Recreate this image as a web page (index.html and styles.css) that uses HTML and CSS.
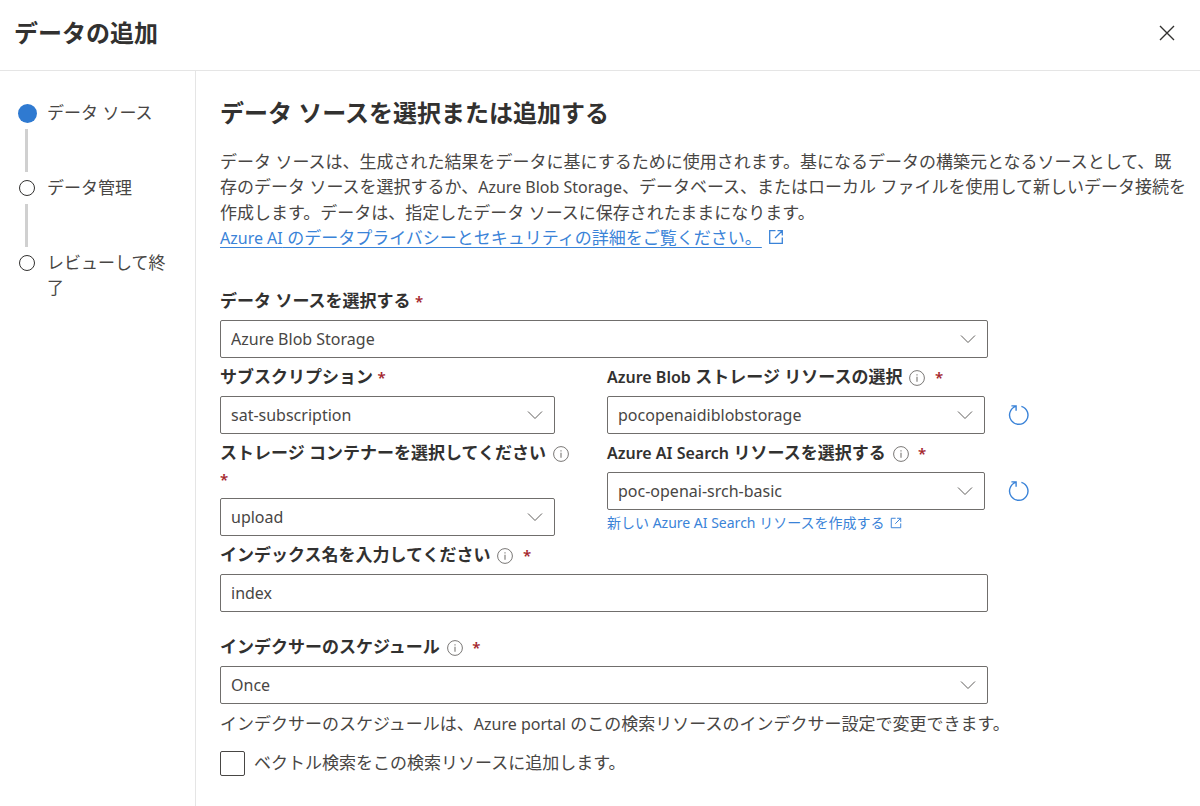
FILE: index.html
```html
<!DOCTYPE html>
<html lang="ja">

<head>
	<meta charset="UTF-8">
	<meta name="viewport" content="width=device-width, initial-scale=1">
	<title>データの追加</title>
	<link rel="stylesheet" href="styles.css">
</head>

<body>
	<!-- shared icons -->
	<svg class="icon-defs" width="0" height="0" aria-hidden="true">
		<symbol id="icon-chevron" viewBox="0 0 16 16">
			<path d="M1 4.5l7 7 7-7" fill="none" stroke="currentColor" stroke-width="1"/>
		</symbol>
		<symbol id="icon-info" viewBox="0 0 16 16">
			<circle cx="8" cy="8" r="7.4" fill="none" stroke="currentColor" stroke-width="1"/>
			<path d="M8 6.8v5M8 4.2v1.3" fill="none" stroke="currentColor" stroke-width="1.1"/>
		</symbol>
		<symbol id="icon-external" viewBox="0 0 16 16">
			<path d="M7.5 1.7H1.7v12.6h12.6V8.5M9.5 1.7h4.8v4.8M14.3 1.7L7 9" fill="none" stroke="currentColor" stroke-width="1.3"/>
		</symbol>
		<symbol id="icon-refresh" viewBox="0 0 22 22">
			<path d="M13.4 2.3A9.2 9.2 0 1 1 7.8 2.4M3.4 1.9h4.7v4.9" fill="none" stroke="currentColor" stroke-width="1.4"/>
		</symbol>
	</svg>

	<header class="header">
		<h1>データの追加</h1>
		<button type="button" class="close" aria-label="閉じる">
			<svg width="16" height="16" viewBox="0 0 16 16"><path d="M1 1l14 14M15 1L1 15" fill="none" stroke="currentColor" stroke-width="1.4"/></svg>
		</button>
	</header>

	<div class="layout">
		<nav class="sidebar">
			<ol class="steps">
				<li class="step active" aria-current="step">
					<span class="marker"></span>
					<span class="step-name">データ ソース</span>
				</li>
				<li class="step">
					<span class="marker"></span>
					<span class="step-name">データ管理</span>
				</li>
				<li class="step">
					<span class="marker"></span>
					<span class="step-name">レビューして終了</span>
				</li>
			</ol>
		</nav>

		<main class="content">
			<h2>データ ソースを選択または追加する</h2>
			<p class="description">
				データ ソースは、生成された結果をデータに基にするために使用されます。基になるデータの構築元となるソースとして、既存のデータ ソースを選択するか、<span class="latin">Azure Blob Storage</span>、データベース、またはローカル ファイルを使用して新しいデータ接続を作成します。データは、指定したデータ ソースに保存されたままになります。<br>
				<a href="#privacy" class="privacy"><u><span class="latin">Azure AI</span> のデータプライバシーとセキュリティの詳細をご覧ください。</u><svg class="external"><use href="#icon-external"/></svg></a>
			</p>

			<form>
				<div class="field">
					<label for="source">データ ソースを選択する <span class="required">*</span></label>
					<div class="select">
						<select id="source"><option>Azure Blob Storage</option></select>
						<svg class="chevron"><use href="#icon-chevron"/></svg>
					</div>
				</div>

				<div class="columns">
					<div class="column">
						<div class="field">
							<label for="subscription">サブスクリプション <span class="required">*</span></label>
							<div class="select">
								<select id="subscription"><option>sat-subscription</option></select>
								<svg class="chevron"><use href="#icon-chevron"/></svg>
							</div>
						</div>
						<div class="field">
							<label for="container">ストレージ コンテナーを選択してください<svg class="info"><use href="#icon-info"/></svg> <span class="required">*</span></label>
							<div class="select">
								<select id="container"><option>upload</option></select>
								<svg class="chevron"><use href="#icon-chevron"/></svg>
							</div>
						</div>
					</div>

					<div class="column">
						<div class="field">
							<label for="storage"><span class="latin">Azure Blob</span> ストレージ リソースの選択<svg class="info"><use href="#icon-info"/></svg> <span class="required">*</span></label>
							<div class="with-refresh">
								<div class="select">
									<select id="storage"><option>pocopenaidiblobstorage</option></select>
									<svg class="chevron"><use href="#icon-chevron"/></svg>
								</div>
								<button type="button" class="refresh" aria-label="更新"><svg><use href="#icon-refresh"/></svg></button>
							</div>
						</div>
						<div class="field">
							<label for="search"><span class="latin">Azure AI Search</span> リソースを選択する<svg class="info"><use href="#icon-info"/></svg> <span class="required">*</span></label>
							<div class="with-refresh">
								<div class="select">
									<select id="search"><option>poc-openai-srch-basic</option></select>
									<svg class="chevron"><use href="#icon-chevron"/></svg>
								</div>
								<button type="button" class="refresh" aria-label="更新"><svg><use href="#icon-refresh"/></svg></button>
							</div>
						</div>
						<a href="#create" class="create">新しい Azure AI Search リソースを作成する<svg class="external"><use href="#icon-external"/></svg></a>
					</div>
				</div>

				<div class="field">
					<label for="index">インデックス名を入力してください<svg class="info"><use href="#icon-info"/></svg> <span class="required">*</span></label>
					<input type="text" id="index" value="index">
				</div>

				<div class="field schedule">
					<label for="schedule">インデクサーのスケジュール<svg class="info"><use href="#icon-info"/></svg> <span class="required">*</span></label>
					<div class="select">
						<select id="schedule"><option>Once</option></select>
						<svg class="chevron"><use href="#icon-chevron"/></svg>
					</div>
				</div>
				<p class="help">インデクサーのスケジュールは、<span class="latin">Azure portal</span> のこの検索リソースのインデクサー設定で変更できます。</p>

				<div class="check">
					<input type="checkbox" id="vector">
					<label for="vector">ベクトル検索をこの検索リソースに追加します。</label>
				</div>
			</form>
		</main>
	</div>
</body>
</html>
```

FILE: styles.css
```css
* {
	box-sizing: border-box;
}

body {
	margin: 0;
	min-height: 100vh;
	display: flex;
	flex-direction: column;
	background: #fff;
	color: #484644;
	font-family: "Noto Sans", "Noto Sans CJK JP", sans-serif;
	font-size: 17px;
	line-height: 26px;
}

h1,
h2 {
	margin: 0;
	color: #323130;
	font-size: 24px;
	font-weight: 600;
	line-height: 32px;
}

a {
	color: #3a83d8;
	text-decoration: none;
}

button {
	padding: 0;
	border: 0;
	background: none;
	cursor: pointer;
}

.icon-defs {
	position: absolute;
}

/* segoe-like width for latin words inside japanese text */
.latin {
	font-size: 16px;
}

/* header */
.header {
	display: flex;
	justify-content: space-between;
	align-items: center;
	padding: 17px 25px 21px 14px;
	border-bottom: 1px solid #e5e5e5;
}

.close {
	display: flex;
	color: #323130;
}

.layout {
	flex: 1;
	display: flex;
}

/* steps */
.sidebar {
	flex: 0 0 196px;
	padding: 29px 24px 0 18px;
	border-right: 1px solid #e5e5e5;
}

.steps {
	margin: 0;
	padding: 0;
	list-style: none;
}

.step {
	display: grid;
	grid-template-columns: 18px 1fr;
	grid-template-rows: 26px 1fr;
	column-gap: 11px;
	min-height: 75px;
}

.step-name {
	grid-column: 2;
	grid-row: 1 / 3;
	line-height: 25px;
}

.marker {
	width: 16px;
	height: 16px;
	margin-left: 1px;
	align-self: center;
	border: 1px solid #323130;
	border-radius: 50%;
}

.active .marker {
	width: 19px;
	height: 19px;
	margin-left: 0;
	border: 0;
	background: #2f7ad1;
}

.step:not(:last-child)::after {
	content: "";
	grid-column: 1;
	grid-row: 2;
	width: 3px;
	margin: 3px 7px;
	background: #d0d0d0;
}

/* content */
.content {
	flex: 1;
	min-width: 0;
	padding: 26px 12px 28px 24px;
}

.description {
	margin: 20px 0 31px;
	line-height: 25px;
}

.external {
	width: 16px;
	height: 16px;
	margin-left: 6px;
	vertical-align: -1px;
}

.privacy u {
	text-underline-offset: 3px;
}

/* form */
form {
	max-width: 810px;
}

.field .select,
.field > input {
	width: 100%;
	max-width: 768px;
}

.field label {
	display: block;
	padding: 6px 0;
	color: #323130;
	font-weight: 600;
}

.required {
	color: #a4262c;
	font-size: 15px;
	font-weight: 600;
}

.info {
	width: 16px;
	height: 16px;
	margin: 0 5px 0 7px;
	color: #797775;
	vertical-align: -3px;
}

.select {
	display: grid;
	align-items: center;
}

.select > * {
	grid-area: 1 / 1;
}

select,
input[type="text"] {
	width: 100%;
	height: 38px;
	padding: 0 10px;
	border: 1px solid #706e6c;
	border-radius: 2px;
	background: #fff;
	color: #484644;
	font-family: inherit;
	font-size: 16px;
	appearance: none;
}

.chevron {
	justify-self: end;
	width: 16px;
	height: 16px;
	margin-right: 12px;
	color: #605e5c;
	pointer-events: none;
}

.columns {
	display: grid;
	grid-template-columns: 355fr 423fr;
	column-gap: 32px;
}

.column:first-child .select {
	max-width: 335px;
}

.with-refresh {
	display: flex;
	align-items: center;
	gap: 23px;
}

.with-refresh .select {
	flex: 1;
}

.refresh {
	display: flex;
	color: #3a83d8;
}

.refresh svg {
	width: 22px;
	height: 22px;
}

.create {
	display: block;
	font-size: 14px;
}

.create .external {
	width: 12px;
	height: 12px;
}

.schedule {
	margin-top: 16px;
}

.help {
	margin: 7px 0 13px;
}

.check {
	display: flex;
	align-items: center;
	gap: 9px;
}

.check input {
	width: 25px;
	height: 25px;
	margin: 0;
	border: 1px solid #484644;
	border-radius: 2px;
	appearance: none;
}
```
